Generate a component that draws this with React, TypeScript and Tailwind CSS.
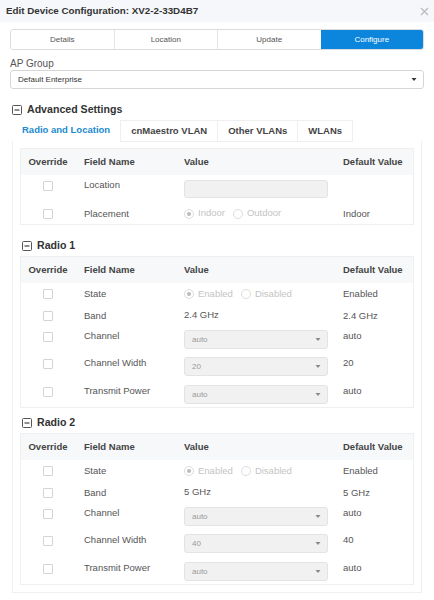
import React from 'react';

const font = { fontFamily: '"Liberation Sans", Arial, sans-serif' };

const MinusBox = () => (
    <svg width="10" height="10" viewBox="0 0 10 10" className="shrink-0">
        <rect x="0.5" y="0.5" width="9" height="9" rx="1" fill="white" stroke="#555" />
        <line x1="2.5" y1="5" x2="7.5" y2="5" stroke="#444" strokeWidth="1.2" />
    </svg>
);

const Caret = ({ color = '#777' }: { color?: string }) => (
    <svg width="6" height="4" viewBox="0 0 6 4">
        <path d="M0.5 0 L5.5 0 L3 3 Z" fill={color} />
    </svg>
);

const Checkbox = () => <div className="w-[10px] h-[10px] border border-[#d4d4d4] rounded-[1px] bg-white" />;

const Radio = ({ checked, label }: { checked?: boolean; label: string }) => (
    <div className="flex items-center gap-[4px]">
        <div className="w-[10px] h-[10px] rounded-full border border-[#ddd] bg-white flex items-center justify-center">
            {checked && <div className="w-[4px] h-[4px] rounded-full bg-[#bbb]" />}
        </div>
        <span className="text-[#c4c4c4]">{label}</span>
    </div>
);

const GraySelect = ({ value }: { value: string }) => (
    <div className="w-[144px] h-[19px] rounded-[3px] border border-[#e3e3e3] bg-[#f1f1f1] flex items-center justify-between pl-[7px] pr-[6px]">
        <span className="text-[8px] text-[#999]">{value}</span>
        <Caret color="#888" />
    </div>
);

type Row = { name: string; kind: 'text' | 'select' | 'radio' | 'input'; value?: string; opts?: string[]; def: string; h: string };

const rowHeights: Record<string, string> = {
    h21: 'h-[21px]',
    h22: 'h-[22px]',
    h26: 'h-[26px]',
    h27: 'h-[27px]',
    h28: 'h-[28px]',
};

const ConfigTable = ({ rows }: { rows: Row[] }) => (
    <div className="border border-[#efefef] text-[9.5px] text-[#555]">
        <div className="grid grid-cols-[54px_100px_159px_1fr] h-[26px] items-center bg-[#f6f8fa] font-bold text-[#444]">
            <div className="text-center">Override</div>
            <div className="pl-[9px]">Field Name</div>
            <div className="pl-[9px]">Value</div>
            <div className="pl-[9px]">Default Value</div>
        </div>
        {rows.map((r) => {
            const tall = r.kind === 'select' || r.kind === 'input';
            return (
                <div
                    key={r.name}
                    className={`grid grid-cols-[54px_100px_159px_1fr] ${rowHeights[r.h]} ${tall ? 'items-start pt-[4px]' : 'items-center'}`}
                >
                    <div className={`flex justify-center ${tall ? 'pt-[2px]' : ''}`}>
                        <Checkbox />
                    </div>
                    <div className={`pl-[9px] leading-[14px] ${tall ? '-mt-[1px]' : ''}`}>{r.name}</div>
                    <div className="pl-[9px]">
                        {r.kind === 'text' && <span>{r.value}</span>}
                        {r.kind === 'select' && <GraySelect value={r.value || ''} />}
                        {r.kind === 'input' && <div className="w-[144px] h-[18px] mt-[1px] rounded-[3px] border border-[#e3e3e3] bg-[#f1f1f1]" />}
                        {r.kind === 'radio' && (
                            <div className="flex items-center gap-[8px]">
                                <Radio checked label={r.opts![0]} />
                                <Radio label={r.opts![1]} />
                            </div>
                        )}
                    </div>
                    <div className={`pl-[9px] leading-[14px] ${tall ? '-mt-[1px]' : ''}`}>{r.def}</div>
                </div>
            );
        })}
    </div>
);

const radioRows = (band: string, width: string): Row[] => [
    { name: 'State', kind: 'radio', opts: ['Enabled', 'Disabled'], def: 'Enabled', h: 'h22' },
    { name: 'Band', kind: 'text', value: band, def: band, h: 'h21' },
    { name: 'Channel', kind: 'select', value: 'auto', def: 'auto', h: 'h27' },
    { name: 'Channel Width', kind: 'select', value: width, def: width, h: 'h28' },
    { name: 'Transmit Power', kind: 'select', value: 'auto', def: 'auto', h: 'h26' },
];

const tabs = ['Details', 'Location', 'Update', 'Configure'];
const subTabs = ['Radio and Location', 'cnMaestro VLAN', 'Other VLANs', 'WLANs'];

export default function App() {
    return (
        <div className="w-[434px] h-[600px] bg-white overflow-hidden" style={font}>
            <div className="h-[22px] bg-[#f5f7fa] flex items-center justify-between pl-[6px] pr-[5px]">
                <span className="text-[9.8px] font-bold text-[#333]">Edit Device Configuration: XV2-2-33D4B7</span>
                <svg width="9" height="9" viewBox="0 0 9 9">
                    <path d="M1 1 L8 8 M8 1 L1 8" stroke="#bbb" strokeWidth="1.3" />
                </svg>
            </div>

            <div className="mt-[7px] mx-[10px] h-[21px] flex border border-[#dcdcdc] rounded-[3px] overflow-hidden">
                {tabs.map((t, i) => (
                    <div
                        key={t}
                        className={`flex-1 flex items-center justify-center text-[8px] ${
                            i === 3 ? 'bg-[#0b86dc] text-white' : 'text-[#555] bg-white'
                        } ${i < 2 ? 'border-r border-[#e4e4e4]' : ''}`}
                    >
                        {t}
                    </div>
                ))}
            </div>

            <div className="mt-[8px] ml-[10px] text-[10px] leading-[12px] text-[#555]">AP Group</div>
            <div className="mx-[10px] h-[19px] border border-[#d6d6d6] rounded-[3px] flex items-center justify-between pl-[7px] pr-[6px]">
                <span className="text-[8px] text-[#333]">Default Enterprise</span>
                <Caret color="#333" />
            </div>

            <div className="mt-[14px] ml-[12px] h-[14px] flex items-center gap-[5px]">
                <MinusBox />
                <span className="text-[10.6px] font-bold text-[#333]">Advanced Settings</span>
            </div>

            <div className="mt-[3px] ml-[12px] flex h-[21px] text-[9.5px] font-bold relative z-10">
                {subTabs.map((t, i) => (
                    <div
                        key={t}
                        className={`flex items-center px-[10px] ${
                            i === 0
                                ? 'text-[#1a8ad0] bg-white'
                                : 'text-[#444] bg-white border-t border-r border-[#efefef] -mb-px border-b'
                        } ${i === 1 ? 'border-l' : ''}`}
                    >
                        {t}
                    </div>
                ))}
            </div>

            <div className="mx-[12px] border border-t-0 border-[#efefef] px-[7px] pt-[7px] pb-[7px]">
                <ConfigTable
                    rows={[
                        { name: 'Location', kind: 'input', def: '', h: 'h28' },
                        { name: 'Placement', kind: 'radio', opts: ['Indoor', 'Outdoor'], def: 'Indoor', h: 'h21' },
                    ]}
                />

                <div className="mt-[14px] ml-[2px] h-[14px] flex items-center gap-[5px]">
                    <MinusBox />
                    <span className="text-[10.6px] font-bold text-[#333]">Radio 1</span>
                </div>
                <div className="mt-[3px]">
                    <ConfigTable rows={radioRows('2.4 GHz', '20')} />
                </div>

                <div className="mt-[8px] ml-[2px] h-[14px] flex items-center gap-[5px]">
                    <MinusBox />
                    <span className="text-[10.6px] font-bold text-[#333]">Radio 2</span>
                </div>
                <div className="mt-[3px]">
                    <ConfigTable rows={radioRows('5 GHz', '40')} />
                </div>
            </div>
        </div>
    );
}
